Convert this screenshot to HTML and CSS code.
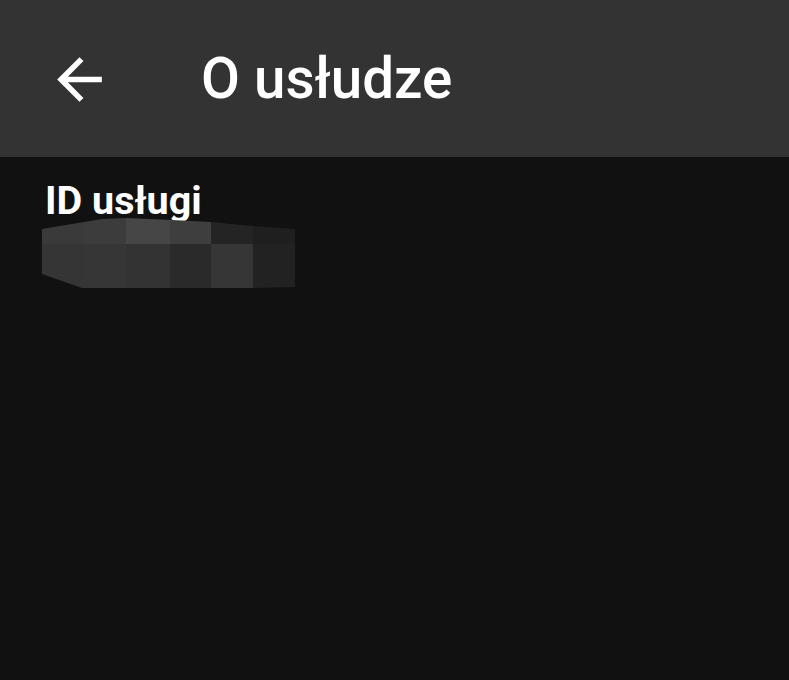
FILE: index.html
```html
<!DOCTYPE html>
<html lang="pl">
<head>
<meta charset="utf-8">
<title>O usłudze</title>
<link rel="stylesheet" href="styles.css">
</head>
<body>
<header class="appbar">
  <button class="back" aria-label="Wstecz">
    <svg viewBox="0 0 24 24" width="67" height="67"><path d="M20 11H7.83l5.59-5.59L12 4l-8 8 8 8 1.41-1.41L7.83 13H20v-2z" fill="#ffffff"/></svg>
  </button>
  <h1 class="title">O usłudze</h1>
</header>
<main class="content">
  <div class="label">ID usługi</div>
  <div class="redacted" aria-hidden="true">
    <span class="c1"></span><span class="c2"></span><span class="c3"></span><span class="c4"></span><span class="c5"></span><span class="c6"></span>
    <span class="c7"></span><span class="c8"></span><span class="c9"></span><span class="c10"></span><span class="c11"></span><span class="c12"></span>
  </div>
</main>
</body>
</html>
```
FILE: styles.css
```css
html, body {
  margin: 0;
  padding: 0;
  background: #111111;
  height: 100%;
}
body {
  font-family: Roboto, "Noto Sans", sans-serif;
  color: #ffffff;
}
.appbar {
  height: 157px;
  background: #333333;
  display: flex;
  align-items: center;
  padding-left: 46px;
  box-sizing: border-box;
}
.back {
  width: 67px;
  height: 67px;
  padding: 0;
  margin: 0;
  border: 0;
  background: none;
  display: block;
  margin-top: 2px;
}
.back svg {
  display: block;
}
.title {
  margin: 0 0 0 88px;
  font-size: 56.5px;
  font-weight: 500;
  line-height: 64px;
  color: #ffffff;
}
.content {
  padding: 24px 0 0 45px;
}
.label {
  font-size: 39.5px;
  font-weight: 700;
  line-height: 40px;
}
.redacted {
  margin-top: -3px;
  margin-left: -3px;
  width: 253px;
  height: 70px;
  display: grid;
  grid-template-columns: 42px 42px 44px 41px 42px 42px;
  grid-template-rows: 26px 44px;
  clip-path: polygon(0 11px, 42px 4px, 60px 1px, 84px 0, 130px 2px, 169px 4px, 211px 8px, 253px 11px, 253px 69px, 210px 70px, 40px 70px, 0 56px);
}
.c1 { background: #3a3a3a; }
.c2 { background: #3c3c3c; }
.c3 { background: #464646; }
.c4 { background: #3e3e3e; }
.c5 { background: #242424; }
.c6 { background: #1f1f1f; }
.c7 { background: #353535; }
.c8 { background: #363636; }
.c9 { background: #333333; }
.c10 { background: #2a2a2a; }
.c11 { background: #363636; }
.c12 { background: #222222; }
```
